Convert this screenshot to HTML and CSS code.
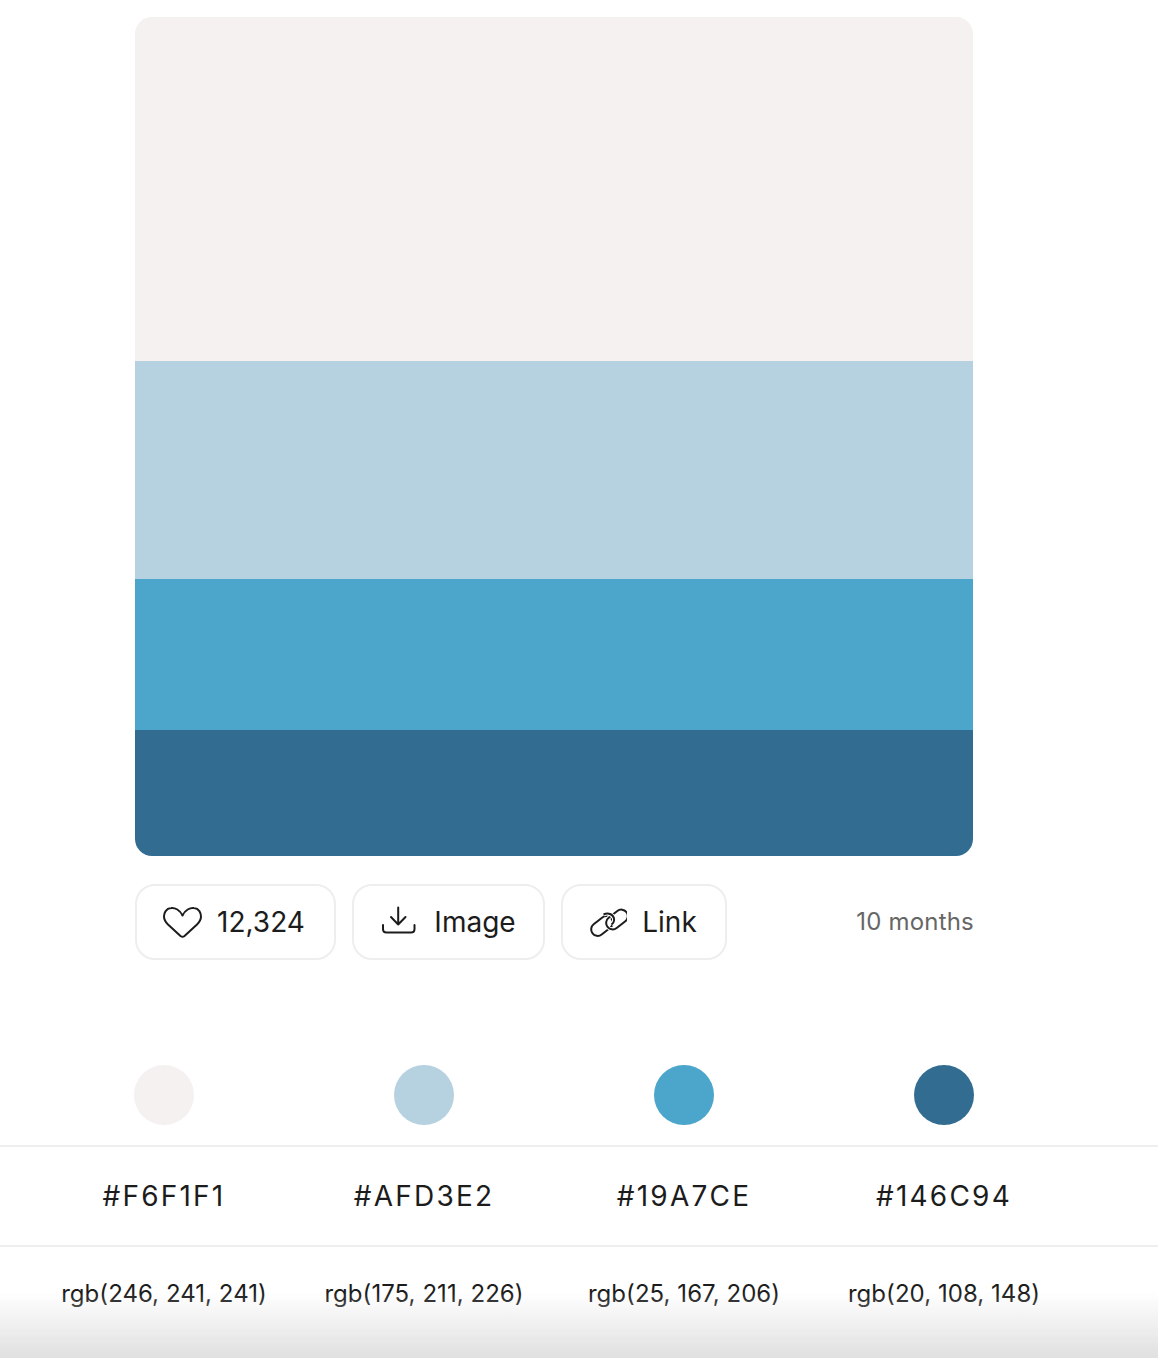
FILE: index.html
```html
<!DOCTYPE html>
<html lang="en">
<head>
  <meta charset="UTF-8">
  <meta name="viewport" content="width=device-width, initial-scale=1.0">
  <title>Color Palette</title>
  <link rel="stylesheet" href="styles.css">
</head>
<body>
  <main class="page">
    <section class="palette-wrap">
      <div class="palette">
        <div class="band band-1"></div>
        <div class="band band-2"></div>
        <div class="band band-3"></div>
        <div class="band band-4"></div>
      </div>
      <div class="actions">
        <button class="btn btn-like">
          <svg class="icon" width="40" height="40" viewBox="4 0 40 40" fill="none" stroke="#1c1c1c" stroke-width="2" stroke-linejoin="round" stroke-linecap="round">
            <path d="M24.500 13.500 C22 8 17 5.500 13 6 C8 6.500 6 11 6 14.500 C6 18 7.500 20 10 22.500 L22.500 34 Q24.500 35.500 26.500 34 L39 22.500 C41.500 20 43 18 43 14.500 C43 11 41 6.500 36 6 C32 5.500 27 8 24.500 13.500 Z"/>
          </svg>
          <span>12,324</span>
        </button>
        <button class="btn btn-image">
          <svg class="icon" width="36" height="36" viewBox="3.500 2 36 36" fill="none" stroke="#1c1c1c" stroke-width="2" stroke-linecap="round" stroke-linejoin="round">
            <path d="M20.700 5.500 V22.500 M13.500 15 L20.700 22.500 L28 15"/>
            <path d="M5.500 23 V27 C5.500 29.500 7 30.500 9 30.500 H33.500 C35.500 30.500 37 29.500 37 27 V23"/>
          </svg>
          <span>Image</span>
        </button>
        <button class="btn btn-link">
          <svg class="icon" width="38" height="38" viewBox="3 1 38 38" fill="none" stroke="#1c1c1c" stroke-width="2">
            <rect x="4" y="17.500" width="24" height="13" rx="6.500" transform="rotate(-38 16 24)"/>
            <rect x="19" y="11" width="24" height="13" rx="6.500" transform="rotate(-38 31 17.500)" stroke="#fff" stroke-width="4"/>
            <rect x="19" y="11" width="24" height="13" rx="6.500" transform="rotate(-38 31 17.500)"/>
            <path d="M17.500 12.500 C22 10.500 27 12 28 16.500 C28.500 19 27.500 21 25.500 22.500" stroke="#fff" stroke-width="4"/>
            <path d="M17.500 12.500 C22 10.500 27 12 28 16.500 C28.500 19 27.500 21 25.500 22.500"/>
          </svg>
          <span>Link</span>
        </button>
        <span class="age">10 months</span>
      </div>
    </section>

    <section class="values">
      <div class="row row-dots">
        <div class="cell"><span class="dot band-1"></span></div>
        <div class="cell"><span class="dot band-2"></span></div>
        <div class="cell"><span class="dot band-3"></span></div>
        <div class="cell"><span class="dot band-4"></span></div>
      </div>
      <div class="row row-hex">
        <div class="cell">#F6F1F1</div>
        <div class="cell">#AFD3E2</div>
        <div class="cell">#19A7CE</div>
        <div class="cell">#146C94</div>
      </div>
      <div class="row row-rgb">
        <div class="cell">rgb(246, 241, 241)</div>
        <div class="cell">rgb(175, 211, 226)</div>
        <div class="cell">rgb(25, 167, 206)</div>
        <div class="cell">rgb(20, 108, 148)</div>
      </div>
    </section>
  </main>
  <div class="fade"></div>
</body>
</html>
```

FILE: styles.css
```css
html, body {
  height: 100%;
}
body {
  font-family: Inter, "Liberation Sans", sans-serif;
  margin: 0;
  padding: 0;
  background-color: #fff;
  color: #1c1c1c;
  overflow: hidden;
}
.page {
  padding-top: 17px;
}
.palette-wrap {
  width: 838px;
  margin-left: 135px;
}
.palette {
  height: 839px;
  border-radius: 17px;
  overflow: hidden;
  display: flex;
  flex-direction: column;
}
.band {
  flex: none;
}
.palette .band-1 { height: 344px; }
.palette .band-2 { height: 218px; }
.palette .band-3 { height: 151px; }
.palette .band-4 { height: 126px; }
.band-1 { background-color: #f5f1f0; }
.band-2 { background-color: #b6d1e0; }
.band-3 { background-color: #4ca5ca; }
.band-4 { background-color: #336c91; }
.actions {
  display: flex;
  align-items: center;
  gap: 16px;
  margin-top: 28px;
}
.btn {
  display: flex;
  align-items: center;
  justify-content: center;
  height: 76px;
  box-sizing: border-box;
  background: #fff;
  border: 2px solid #eee;
  border-radius: 20px;
  font-family: inherit;
  font-size: 28px;
  color: #1c1c1c;
  padding: 0;
  cursor: pointer;
}
.btn-like { width: 201px; gap: 15px; padding-right: 4px; }
.btn-image { width: 193px; gap: 17px; }
.btn-link { width: 166px; gap: 15px; padding-right: 2px; }
.icon {
  flex: none;
}
.age {
  margin-left: auto;
  margin-right: -1px;
  margin-bottom: 2px;
  font-size: 24px;
  letter-spacing: 0.200px;
  color: #666;
}
.values {
  margin-top: 105px;
}
.row {
  display: grid;
  grid-template-columns: repeat(4, 260px);
  padding-left: 34px;
}
.cell {
  display: flex;
  align-items: center;
  justify-content: center;
  white-space: nowrap;
}
.dot {
  display: block;
  width: 60px;
  height: 60px;
  border-radius: 50%;
}
.row-dots {
  height: 80px;
  align-items: start;
}
.row-hex {
  height: 98px;
  border-top: 2px solid #eee;
  font-size: 28px;
  letter-spacing: 2.200px;
}
.row-rgb {
  height: 92px;
  border-top: 2px solid #eee;
  font-size: 24px;
  letter-spacing: 0.050px;
}
.fade {
  position: fixed;
  left: 0;
  right: 0;
  bottom: 0;
  height: 66px;
  background: linear-gradient(to bottom, rgba(224, 224, 224, 0), rgba(224, 224, 224, 1));
  pointer-events: none;
}
```
